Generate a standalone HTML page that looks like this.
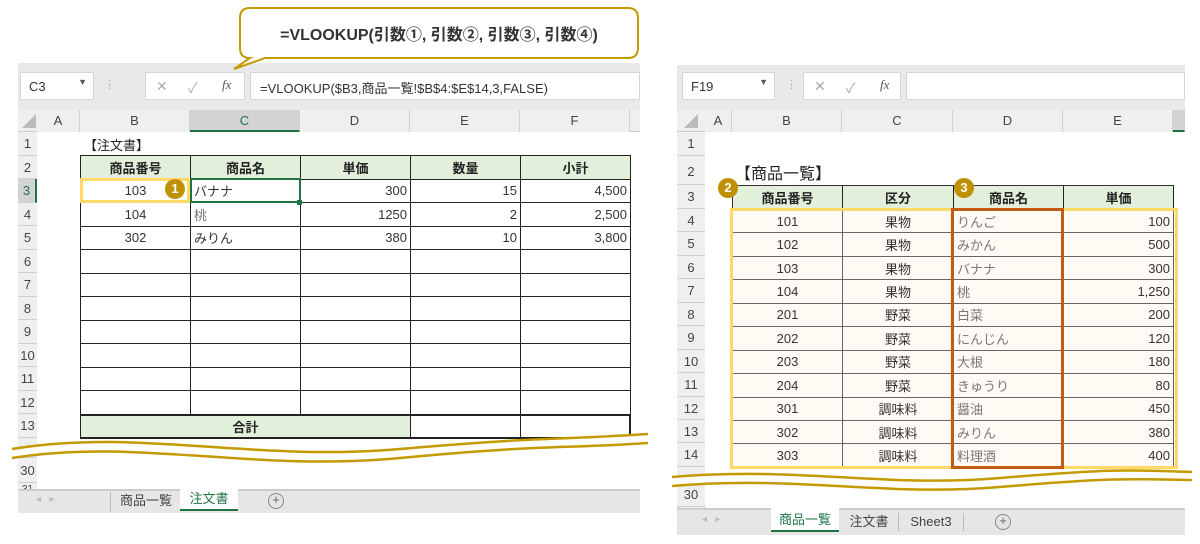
<!DOCTYPE html>
<html><head><meta charset="utf-8">
<style>
*{box-sizing:border-box;margin:0;padding:0}
body{width:1200px;height:544px;background:#fff;position:relative;overflow:hidden;font-family:"Liberation Sans","Noto Sans CJK JP",sans-serif;color:#333}
.a{position:absolute}
.panel{background:#e9e9e9}
.box{background:#fff;border:1px solid #d6d6d6}
.hdr{background:#efefef;color:#444;font-size:13px;text-align:center;border-right:1px solid #d0d0d0}
.rh{background:#efefef;color:#444;font-size:13px;text-align:center;border-bottom:1px solid #d0d0d0;width:100%}
.row{display:flex}
.c{border-right:1px solid #222;border-bottom:1px solid #222;font-size:13px;padding:0 3px;display:flex;align-items:center;overflow:hidden;white-space:nowrap}
.ce{justify-content:center}.r{justify-content:flex-end}
.g{background:#e2efda;font-weight:bold;color:#222}
.badge{position:absolute;width:20px;height:20px;border-radius:50%;background:#bf9000;color:#fff;font-weight:bold;font-size:13px;text-align:center;line-height:20px}
.tab{position:absolute;font-size:13px;color:#444;text-align:center;height:24px;line-height:24px}
</style></head><body>

<!-- LEFT PANEL -->
<div class="a panel" style="left:18px;top:63px;width:622px;height:450px"></div>
<div class="a box" style="left:20px;top:72px;width:74px;height:28px;font-size:13px;padding:6px 8px;color:#333">C3<span style="position:absolute;right:6px;top:4px;font-size:9px;color:#555">▼</span></div>
<div class="a" style="left:104px;top:78px;font-size:11px;color:#aaa">⋮</div>
<div class="a box" style="left:145px;top:72px;width:100px;height:28px;font-size:14px;color:#aaa"><span class="a" style="left:10px;top:5px">✕</span><span class="a" style="left:42px;top:5px">✓</span><span class="a" style="left:76px;top:4px;font-style:italic;font-family:'Liberation Serif',serif;color:#555;font-size:13px">fx</span></div>
<div class="a box" style="left:250px;top:72px;width:390px;height:28px;font-size:13px;padding:5px 9px;color:#333">=VLOOKUP($B3,商品一覧!$B$4:$E$14,3,FALSE)</div>
<!-- col headers -->
<div class="a" style="left:18px;top:110px;width:622px;height:22px;background:#efefef;border-bottom:1px solid #ccc"></div>
<div class="a" style="left:22px;top:114px;width:0;height:0;border-left:14px solid transparent;border-bottom:14px solid #bbb"></div>
<div class="a row" style="left:37px;top:110px;height:22px;line-height:22px">
<div class="hdr" style="width:43px">A</div><div class="hdr" style="width:110px">B</div><div class="hdr" style="width:110px;background:#d3d3d3;color:#217346;border-bottom:2px solid #217346">C</div><div class="hdr" style="width:110px">D</div><div class="hdr" style="width:110px">E</div><div class="hdr" style="width:110px">F</div>
</div>
<!-- cell area -->
<div class="a" style="left:37px;top:132px;width:603px;height:357px;background:#fff"></div>
<!-- row headers -->
<div class="a" style="left:18px;top:132px;width:19px;height:357px;background:#efefef;border-right:1px solid #ccc"></div>
<div class="a" style="left:18px;top:132px;width:19px">
<div class="rh" style="height:23.5px;line-height:23.5px">1</div><div class="rh" style="height:23.5px;line-height:23.5px">2</div><div class="rh" style="height:23.5px;line-height:23.5px;background:#d3d3d3;color:#217346;border-right:2px solid #217346">3</div><div class="rh" style="height:23.5px;line-height:23.5px">4</div><div class="rh" style="height:23.5px;line-height:23.5px">5</div><div class="rh" style="height:23.5px;line-height:23.5px">6</div><div class="rh" style="height:23.5px;line-height:23.5px">7</div><div class="rh" style="height:23.5px;line-height:23.5px">8</div><div class="rh" style="height:23.5px;line-height:23.5px">9</div><div class="rh" style="height:23.5px;line-height:23.5px">10</div><div class="rh" style="height:23.5px;line-height:23.5px">11</div><div class="rh" style="height:23.5px;line-height:23.5px">12</div><div class="rh" style="height:23.5px;line-height:23.5px">13</div><div class="rh" style="height:20px"></div><div class="rh" style="height:25px;line-height:25px">30</div><div class="rh" style="height:10px;font-size:10px;line-height:14px">31</div>
</div>
<div class="a" style="left:84px;top:135px;font-size:13px;color:#222">【注文書】</div>
<!-- left table -->
<div class="a" style="left:80px;top:155px;border-left:1px solid #222;border-top:1px solid #222">
<div class="row" style="height:23.5px"><div class="c ce g" style="width:110px">商品番号</div><div class="c ce g" style="width:110px">商品名</div><div class="c ce g" style="width:110px">単価</div><div class="c ce g" style="width:110px">数量</div><div class="c ce g" style="width:110px">小計</div></div>
<div class="row" style="height:23.5px"><div class="c ce" style="width:110px">103</div><div class="c" style="width:110px">バナナ</div><div class="c r" style="width:110px">300</div><div class="c r" style="width:110px">15</div><div class="c r" style="width:110px">4,500</div></div>
<div class="row" style="height:23.5px"><div class="c ce" style="width:110px">104</div><div class="c" style="width:110px;color:#777">桃</div><div class="c r" style="width:110px">1250</div><div class="c r" style="width:110px">2</div><div class="c r" style="width:110px">2,500</div></div>
<div class="row" style="height:23.5px"><div class="c ce" style="width:110px">302</div><div class="c" style="width:110px">みりん</div><div class="c r" style="width:110px">380</div><div class="c r" style="width:110px">10</div><div class="c r" style="width:110px">3,800</div></div>
<div class="row" style="height:23.5px"><div class="c" style="width:110px"></div><div class="c" style="width:110px"></div><div class="c" style="width:110px"></div><div class="c" style="width:110px"></div><div class="c" style="width:110px"></div></div>
<div class="row" style="height:23.5px"><div class="c" style="width:110px"></div><div class="c" style="width:110px"></div><div class="c" style="width:110px"></div><div class="c" style="width:110px"></div><div class="c" style="width:110px"></div></div>
<div class="row" style="height:23.5px"><div class="c" style="width:110px"></div><div class="c" style="width:110px"></div><div class="c" style="width:110px"></div><div class="c" style="width:110px"></div><div class="c" style="width:110px"></div></div>
<div class="row" style="height:23.5px"><div class="c" style="width:110px"></div><div class="c" style="width:110px"></div><div class="c" style="width:110px"></div><div class="c" style="width:110px"></div><div class="c" style="width:110px"></div></div>
<div class="row" style="height:23.5px"><div class="c" style="width:110px"></div><div class="c" style="width:110px"></div><div class="c" style="width:110px"></div><div class="c" style="width:110px"></div><div class="c" style="width:110px"></div></div>
<div class="row" style="height:23.5px"><div class="c" style="width:110px"></div><div class="c" style="width:110px"></div><div class="c" style="width:110px"></div><div class="c" style="width:110px"></div><div class="c" style="width:110px"></div></div>
<div class="row" style="height:23.5px"><div class="c" style="width:110px"></div><div class="c" style="width:110px"></div><div class="c" style="width:110px"></div><div class="c" style="width:110px"></div><div class="c" style="width:110px"></div></div>
<div class="row" style="height:24px;border-top:1px solid #222;border-bottom:1px solid #222"><div class="c ce g" style="width:330px">合計</div><div class="c" style="width:110px"></div><div class="c" style="width:110px;border-right:2px solid #222"></div></div>
</div>
<div class="a" style="left:80px;top:178px;width:110px;height:25px;border:3px solid #ffd966"></div>
<div class="a" style="left:190px;top:178px;width:111px;height:25px;border:2px solid #217346"></div>
<div class="a" style="left:297px;top:200px;width:5px;height:5px;background:#217346"></div>
<div class="badge" style="left:165px;top:179px">1</div>
<!-- left tabs -->
<div class="a" style="left:18px;top:489px;width:622px;height:24px;background:#e6e6e6;border-top:2px solid #ccc"></div>
<div class="a" style="left:36px;top:494px;font-size:10px;color:#bbb">◂ &nbsp; ▸</div>
<div class="a" style="left:110px;top:492px;width:1px;height:20px;background:#bbb"></div>
<div class="tab" style="left:112px;top:489px;width:68px">商品一覧</div>
<div class="tab" style="left:180px;top:487px;width:58px;background:#fff;color:#217346;border-bottom:2px solid #217346">注文書</div>
<div class="a" style="left:268px;top:493px;width:16px;height:16px;border:1.5px solid #888;border-radius:50%;font-size:13px;line-height:12px;text-align:center;color:#666">+</div>

<!-- RIGHT PANEL -->
<div class="a panel" style="left:677px;top:65px;width:508px;height:470px"></div>
<div class="a box" style="left:682px;top:72px;width:93px;height:28px;font-size:13px;padding:6px 8px">F19<span style="position:absolute;right:6px;top:4px;font-size:9px;color:#555">▼</span></div>
<div class="a" style="left:786px;top:78px;font-size:11px;color:#aaa">⋮</div>
<div class="a box" style="left:803px;top:72px;width:98px;height:28px;font-size:14px;color:#aaa"><span class="a" style="left:10px;top:5px">✕</span><span class="a" style="left:42px;top:5px">✓</span><span class="a" style="left:76px;top:4px;font-style:italic;font-family:'Liberation Serif',serif;color:#555;font-size:13px">fx</span></div>
<div class="a box" style="left:906px;top:72px;width:279px;height:28px"></div>
<div class="a" style="left:677px;top:110px;width:508px;height:22px;background:#efefef;border-bottom:1px solid #ccc"></div>
<div class="a" style="left:684px;top:114px;width:0;height:0;border-left:14px solid transparent;border-bottom:14px solid #bbb"></div>
<div class="a row" style="left:705px;top:110px;height:22px;line-height:22px">
<div class="hdr" style="width:27px">A</div><div class="hdr" style="width:110px">B</div><div class="hdr" style="width:111px">C</div><div class="hdr" style="width:110px">D</div><div class="hdr" style="width:110px">E</div><div class="hdr" style="width:12px;background:#d3d3d3;border-bottom:2px solid #217346"></div>
</div>
<div class="a" style="left:705px;top:132px;width:480px;height:376px;background:#fff"></div>
<div class="a" style="left:677px;top:132px;width:28px;height:376px;background:#efefef;border-right:1px solid #ccc"></div>
<div class="a" style="left:677px;top:132px;width:28px">
<div class="rh" style="height:24px;line-height:24px">1</div><div class="rh" style="height:29px;line-height:32px">2</div><div class="rh" style="height:24px;line-height:24px">3</div><div class="rh" style="height:23.45px;line-height:23px">4</div><div class="rh" style="height:23.45px;line-height:23px">5</div><div class="rh" style="height:23.45px;line-height:23px">6</div><div class="rh" style="height:23.45px;line-height:23px">7</div><div class="rh" style="height:23.45px;line-height:23px">8</div><div class="rh" style="height:23.45px;line-height:23px">9</div><div class="rh" style="height:23.45px;line-height:23px">10</div><div class="rh" style="height:23.45px;line-height:23px">11</div><div class="rh" style="height:23.45px;line-height:23px">12</div><div class="rh" style="height:23.45px;line-height:23px">13</div><div class="rh" style="height:23.45px;line-height:23px">14</div><div class="rh" style="height:16px"></div><div class="rh" style="height:24px;line-height:24px">30</div>
</div>
<div class="a" style="left:735px;top:160px;font-size:16px;color:#222">【商品一覧】</div>
<div class="a" style="left:732px;top:185px;border-left:1px solid #333;border-top:1px solid #333">
<div class="row" style="height:24px"><div class="c ce g" style="width:110px">商品番号</div><div class="c ce g" style="width:111px">区分</div><div class="c ce g" style="width:110px">商品名</div><div class="c ce g" style="width:110px">単価</div></div>
<div style="background:#fffaf3">
<div class="row" style="height:23.45px"><div class="c ce" style="width:110px;border-color:#666">101</div><div class="c ce" style="width:111px;border-color:#666">果物</div><div class="c" style="width:110px;border-color:#666;color:#777">りんご</div><div class="c r" style="width:110px;border-color:#666">100</div></div>
<div class="row" style="height:23.45px"><div class="c ce" style="width:110px;border-color:#666">102</div><div class="c ce" style="width:111px;border-color:#666">果物</div><div class="c" style="width:110px;border-color:#666;color:#777">みかん</div><div class="c r" style="width:110px;border-color:#666">500</div></div>
<div class="row" style="height:23.45px"><div class="c ce" style="width:110px;border-color:#666">103</div><div class="c ce" style="width:111px;border-color:#666">果物</div><div class="c" style="width:110px;border-color:#666;color:#777">バナナ</div><div class="c r" style="width:110px;border-color:#666">300</div></div>
<div class="row" style="height:23.45px"><div class="c ce" style="width:110px;border-color:#666">104</div><div class="c ce" style="width:111px;border-color:#666">果物</div><div class="c" style="width:110px;border-color:#666;color:#777">桃</div><div class="c r" style="width:110px;border-color:#666">1,250</div></div>
<div class="row" style="height:23.45px"><div class="c ce" style="width:110px;border-color:#666">201</div><div class="c ce" style="width:111px;border-color:#666">野菜</div><div class="c" style="width:110px;border-color:#666;color:#777">白菜</div><div class="c r" style="width:110px;border-color:#666">200</div></div>
<div class="row" style="height:23.45px"><div class="c ce" style="width:110px;border-color:#666">202</div><div class="c ce" style="width:111px;border-color:#666">野菜</div><div class="c" style="width:110px;border-color:#666;color:#777">にんじん</div><div class="c r" style="width:110px;border-color:#666">120</div></div>
<div class="row" style="height:23.45px"><div class="c ce" style="width:110px;border-color:#666">203</div><div class="c ce" style="width:111px;border-color:#666">野菜</div><div class="c" style="width:110px;border-color:#666;color:#777">大根</div><div class="c r" style="width:110px;border-color:#666">180</div></div>
<div class="row" style="height:23.45px"><div class="c ce" style="width:110px;border-color:#666">204</div><div class="c ce" style="width:111px;border-color:#666">野菜</div><div class="c" style="width:110px;border-color:#666;color:#777">きゅうり</div><div class="c r" style="width:110px;border-color:#666">80</div></div>
<div class="row" style="height:23.45px"><div class="c ce" style="width:110px;border-color:#666">301</div><div class="c ce" style="width:111px;border-color:#666">調味料</div><div class="c" style="width:110px;border-color:#666;color:#777">醤油</div><div class="c r" style="width:110px;border-color:#666">450</div></div>
<div class="row" style="height:23.45px"><div class="c ce" style="width:110px;border-color:#666">302</div><div class="c ce" style="width:111px;border-color:#666">調味料</div><div class="c" style="width:110px;border-color:#666;color:#777">みりん</div><div class="c r" style="width:110px;border-color:#666">380</div></div>
<div class="row" style="height:23.45px"><div class="c ce" style="width:110px;border-color:#666">303</div><div class="c ce" style="width:111px;border-color:#666">調味料</div><div class="c" style="width:110px;border-color:#666;color:#777">料理酒</div><div class="c r" style="width:110px;border-color:#666">400</div></div>
</div></div>
<div class="a" style="left:730px;top:208px;width:448px;height:261px;border:3px solid #ffd966"></div>
<div class="a" style="left:951px;top:208px;width:113px;height:261px;border:3px solid #c55a11"></div>
<div class="badge" style="left:718px;top:178px">2</div>
<div class="badge" style="left:954px;top:178px">3</div>
<div class="a" style="left:677px;top:508px;width:508px;height:27px;background:#e6e6e6;border-top:2px solid #ccc"></div>
<div class="a" style="left:702px;top:514px;font-size:10px;color:#bbb">◂ &nbsp; ▸</div>
<div class="tab" style="left:771px;top:508px;width:68px;background:#fff;color:#217346;border-bottom:2px solid #217346">商品一覧</div>
<div class="tab" style="left:840px;top:510px;width:58px">注文書</div>
<div class="a" style="left:898px;top:513px;width:1px;height:18px;background:#bbb"></div>
<div class="tab" style="left:899px;top:510px;width:64px">Sheet3</div>
<div class="a" style="left:963px;top:513px;width:1px;height:18px;background:#bbb"></div>
<div class="a" style="left:995px;top:514px;width:16px;height:16px;border:1.5px solid #888;border-radius:50%;font-size:13px;line-height:12px;text-align:center;color:#666">+</div>

<!-- waves + bubble -->
<svg class="a" style="left:0;top:0" width="1200" height="544">
<path d="M12 449 C140 428 250 462 400 449 S560 440 648 434 L648 443 C560 449 520 458 400 458 S140 438 12 458 Z" fill="#fff" stroke="none"/>
<path d="M12 449 C140 428 250 462 400 449 S560 440 648 434" fill="none" stroke="#c49a00" stroke-width="2.5"/>
<path d="M12 458 C140 438 250 472 400 458 S560 449 648 443" fill="none" stroke="#c49a00" stroke-width="2.5"/>
<path d="M672 477 C800 466 880 488 1000 478 S1130 470 1192 472 L1192 480 C1130 478 1100 488 1000 487 S800 475 672 486 Z" fill="#fff"/>
<path d="M672 477 C800 466 880 488 1000 478 S1130 470 1192 472" fill="none" stroke="#c49a00" stroke-width="2.5"/>
<path d="M672 486 C800 475 880 497 1000 487 S1130 479 1192 480" fill="none" stroke="#c49a00" stroke-width="2.5"/>
<path d="M262 8 H628 Q638 8 638 18 V48 Q638 58 628 58 H265 L234 69 L250 58 Q240 58 240 48 V18 Q240 8 250 8 Z" fill="#fff" stroke="#c49a00" stroke-width="2"/>
<text x="439" y="40" text-anchor="middle" font-family="Liberation Sans, Noto Sans CJK JP, sans-serif" font-size="16" font-weight="bold" fill="#333">=VLOOKUP(引数①, 引数②, 引数③, 引数④)</text>
</svg>
</body></html>
